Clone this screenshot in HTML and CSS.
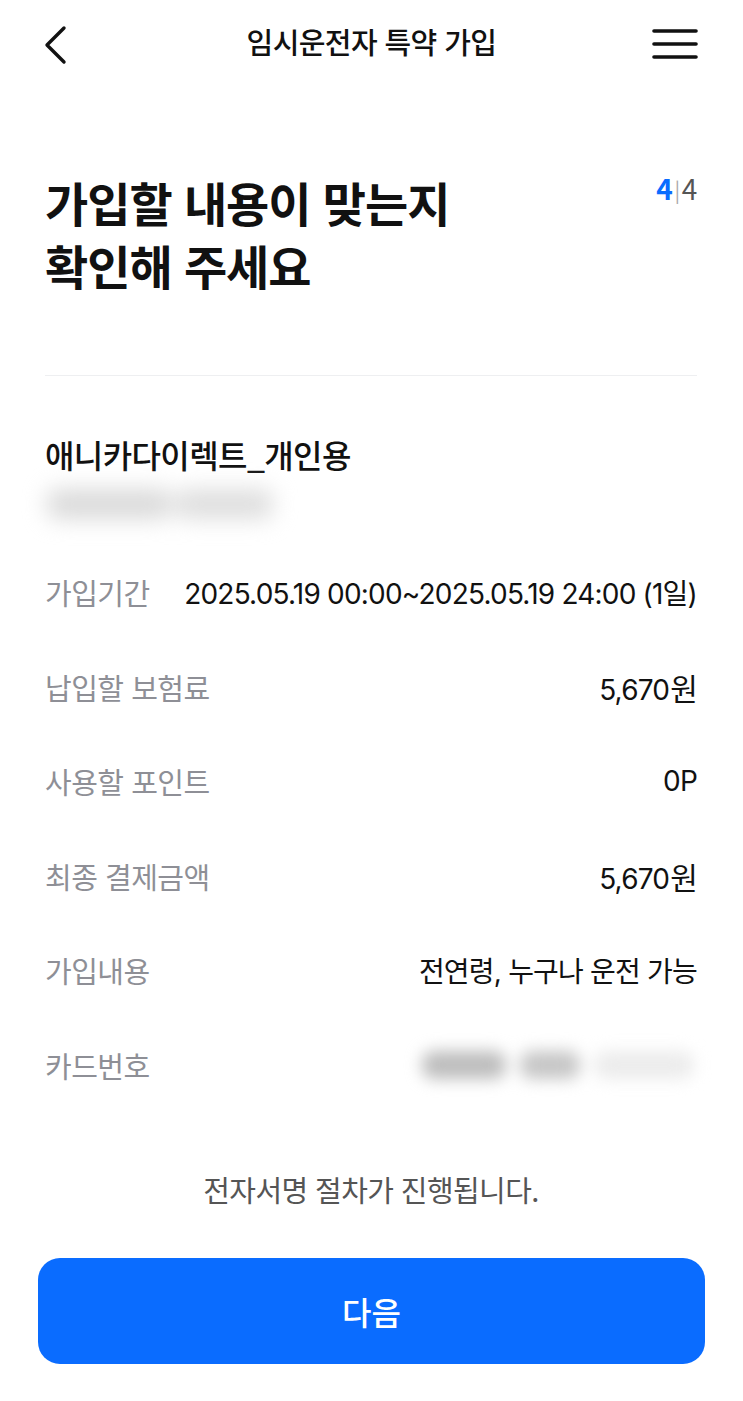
FILE: index.html
```html
<!DOCTYPE html>
<html lang="ko">
<head>
<meta charset="utf-8">
<link rel="stylesheet" href="styles.css">
</head>
<body>
<div class="page">
  <header class="topbar">
    <svg class="back" width="26" height="40" viewBox="0 0 26 40"><path d="M22 3 L5 20 L22 37" fill="none" stroke="#111" stroke-width="3.4" stroke-linecap="round" stroke-linejoin="round"/></svg>
    <div class="title">임시운전자 특약 가입</div>
    <svg class="menu" width="46" height="32" viewBox="0 0 46 32"><g stroke="#111" stroke-width="3.6" stroke-linecap="round"><path d="M2 3H44"/><path d="M2 16H44"/><path d="M2 29H44"/></g></svg>
  </header>

  <section class="intro">
    <h1 class="heading">가입할 내용이 맞는지<br>확인해 주세요</h1>
    <div class="step"><span class="cur">4</span><span class="sep">|</span><span class="tot">4</span></div>
  </section>

  <hr class="divider">

  <section class="product">
    <div class="pname">애니카다이렉트_개인용</div>
    <div class="blur-line"><i class="s1"></i><i class="s2"></i></div>
  </section>

  <section class="rows">
    <div class="row"><span class="label">가입기간</span><span class="value">2025.05.19 00:00~2025.05.19 24:00 (1일)</span></div>
    <div class="row"><span class="label">납입할 보험료</span><span class="value">5,670<span class="unit">원</span></span></div>
    <div class="row"><span class="label">사용할 포인트</span><span class="value">0P</span></div>
    <div class="row"><span class="label">최종 결제금액</span><span class="value">5,670<span class="unit">원</span></span></div>
    <div class="row"><span class="label">가입내용</span><span class="value">전연령, 누구나 운전 가능</span></div>
    <div class="row"><span class="label">카드번호</span><span class="value card"><i class="b1"></i><i class="b2"></i><i class="b3"></i></span></div>
  </section>

  <p class="notice">전자서명 절차가 진행됩니다.</p>

  <button class="next">다음</button>
</div>
</body>
</html>
```
FILE: styles.css
```css
* { box-sizing: border-box; }
html, body { margin: 0; padding: 0; background: #fff; }
body {
  font-family: "Noto Sans CJK KR", "Noto Sans", sans-serif;
  color: #111;
}
.page { width: 743px; min-height: 1401px; padding: 0 46px 0 45px; position: relative; }

.topbar {
  height: 88px;
  display: flex;
  align-items: center;
  justify-content: space-between;
  position: relative;
}
.back { margin-left: -3px; margin-top: 1px; }
.title {
  position: absolute; left: -45px; right: -46px; text-align: center;
  font-size: 29px; font-weight: 500; letter-spacing: -0.6px; color: #111;
  top: 20px;
}
.menu { margin-right: -1px; margin-top: 0; }

.intro { display: flex; justify-content: space-between; padding-top: 82px; }
.heading {
  margin: 0;
  font-size: 47px; font-weight: 700; line-height: 63px; letter-spacing: -1px;
  color: #111;
}
.step { font-size: 28px; line-height: 30px; margin-top: 3px; letter-spacing: -0.3px; }
.step .cur { color: #0a6cff; font-weight: 700; }
.step .sep { color: #aaa; font-size: 21px; margin: 0 2px; vertical-align: 2px; }
.step .tot { color: #555; }

.divider { border: 0; border-top: 1.5px solid #eeeff1; margin: 79px 0 0; }

.product { padding-top: 56px; }
.pname { font-size: 32px; font-weight: 500; letter-spacing: -0.6px; line-height: 44px; }
.blur-line {
  display: flex; gap: 4px; width: 226px; height: 30px; margin: 13px 0 0 2px;
  filter: blur(11px);
}
.blur-line i { display: block; height: 30px; border-radius: 10px; }
.blur-line .s1 { width: 124px; background: #dadada; }
.blur-line .s2 { width: 98px; background: #dedede; }

.rows { padding-top: 26px; }
.row {
  display: flex; justify-content: space-between; align-items: center;
  height: 94.5px;
}
.label { font-size: 29px; color: #8e8f96; letter-spacing: -0.5px; }
.value { font-family: "Inter", "Noto Sans CJK KR", sans-serif; font-size: 28px; color: #111; letter-spacing: -0.8px; }
.value .unit { font-size: 30px; margin-left: 1px; }
.card { display: flex; gap: 14px; align-items: center; width: 275px; height: 40px; filter: blur(8px); }
.card i { display: block; height: 28px; border-radius: 12px; }
.card .b1 { width: 84px; background: #bdbdbd; }
.card .b2 { width: 60px; background: #c6c6c6; }
.card .b3 { width: 100px; background: #ececec; }

.notice {
  margin: 56px 0 0; text-align: center;
  font-size: 29px; color: #555; letter-spacing: -0.6px;
}

.next {
  display: block; width: 667px; height: 106px; margin: 48px 0 0 -7px;
  background: #0a6cff; color: #fff; border: 0; border-radius: 22px;
  font-family: "Noto Sans CJK KR", sans-serif; font-size: 32px; font-weight: 500;
}
```
